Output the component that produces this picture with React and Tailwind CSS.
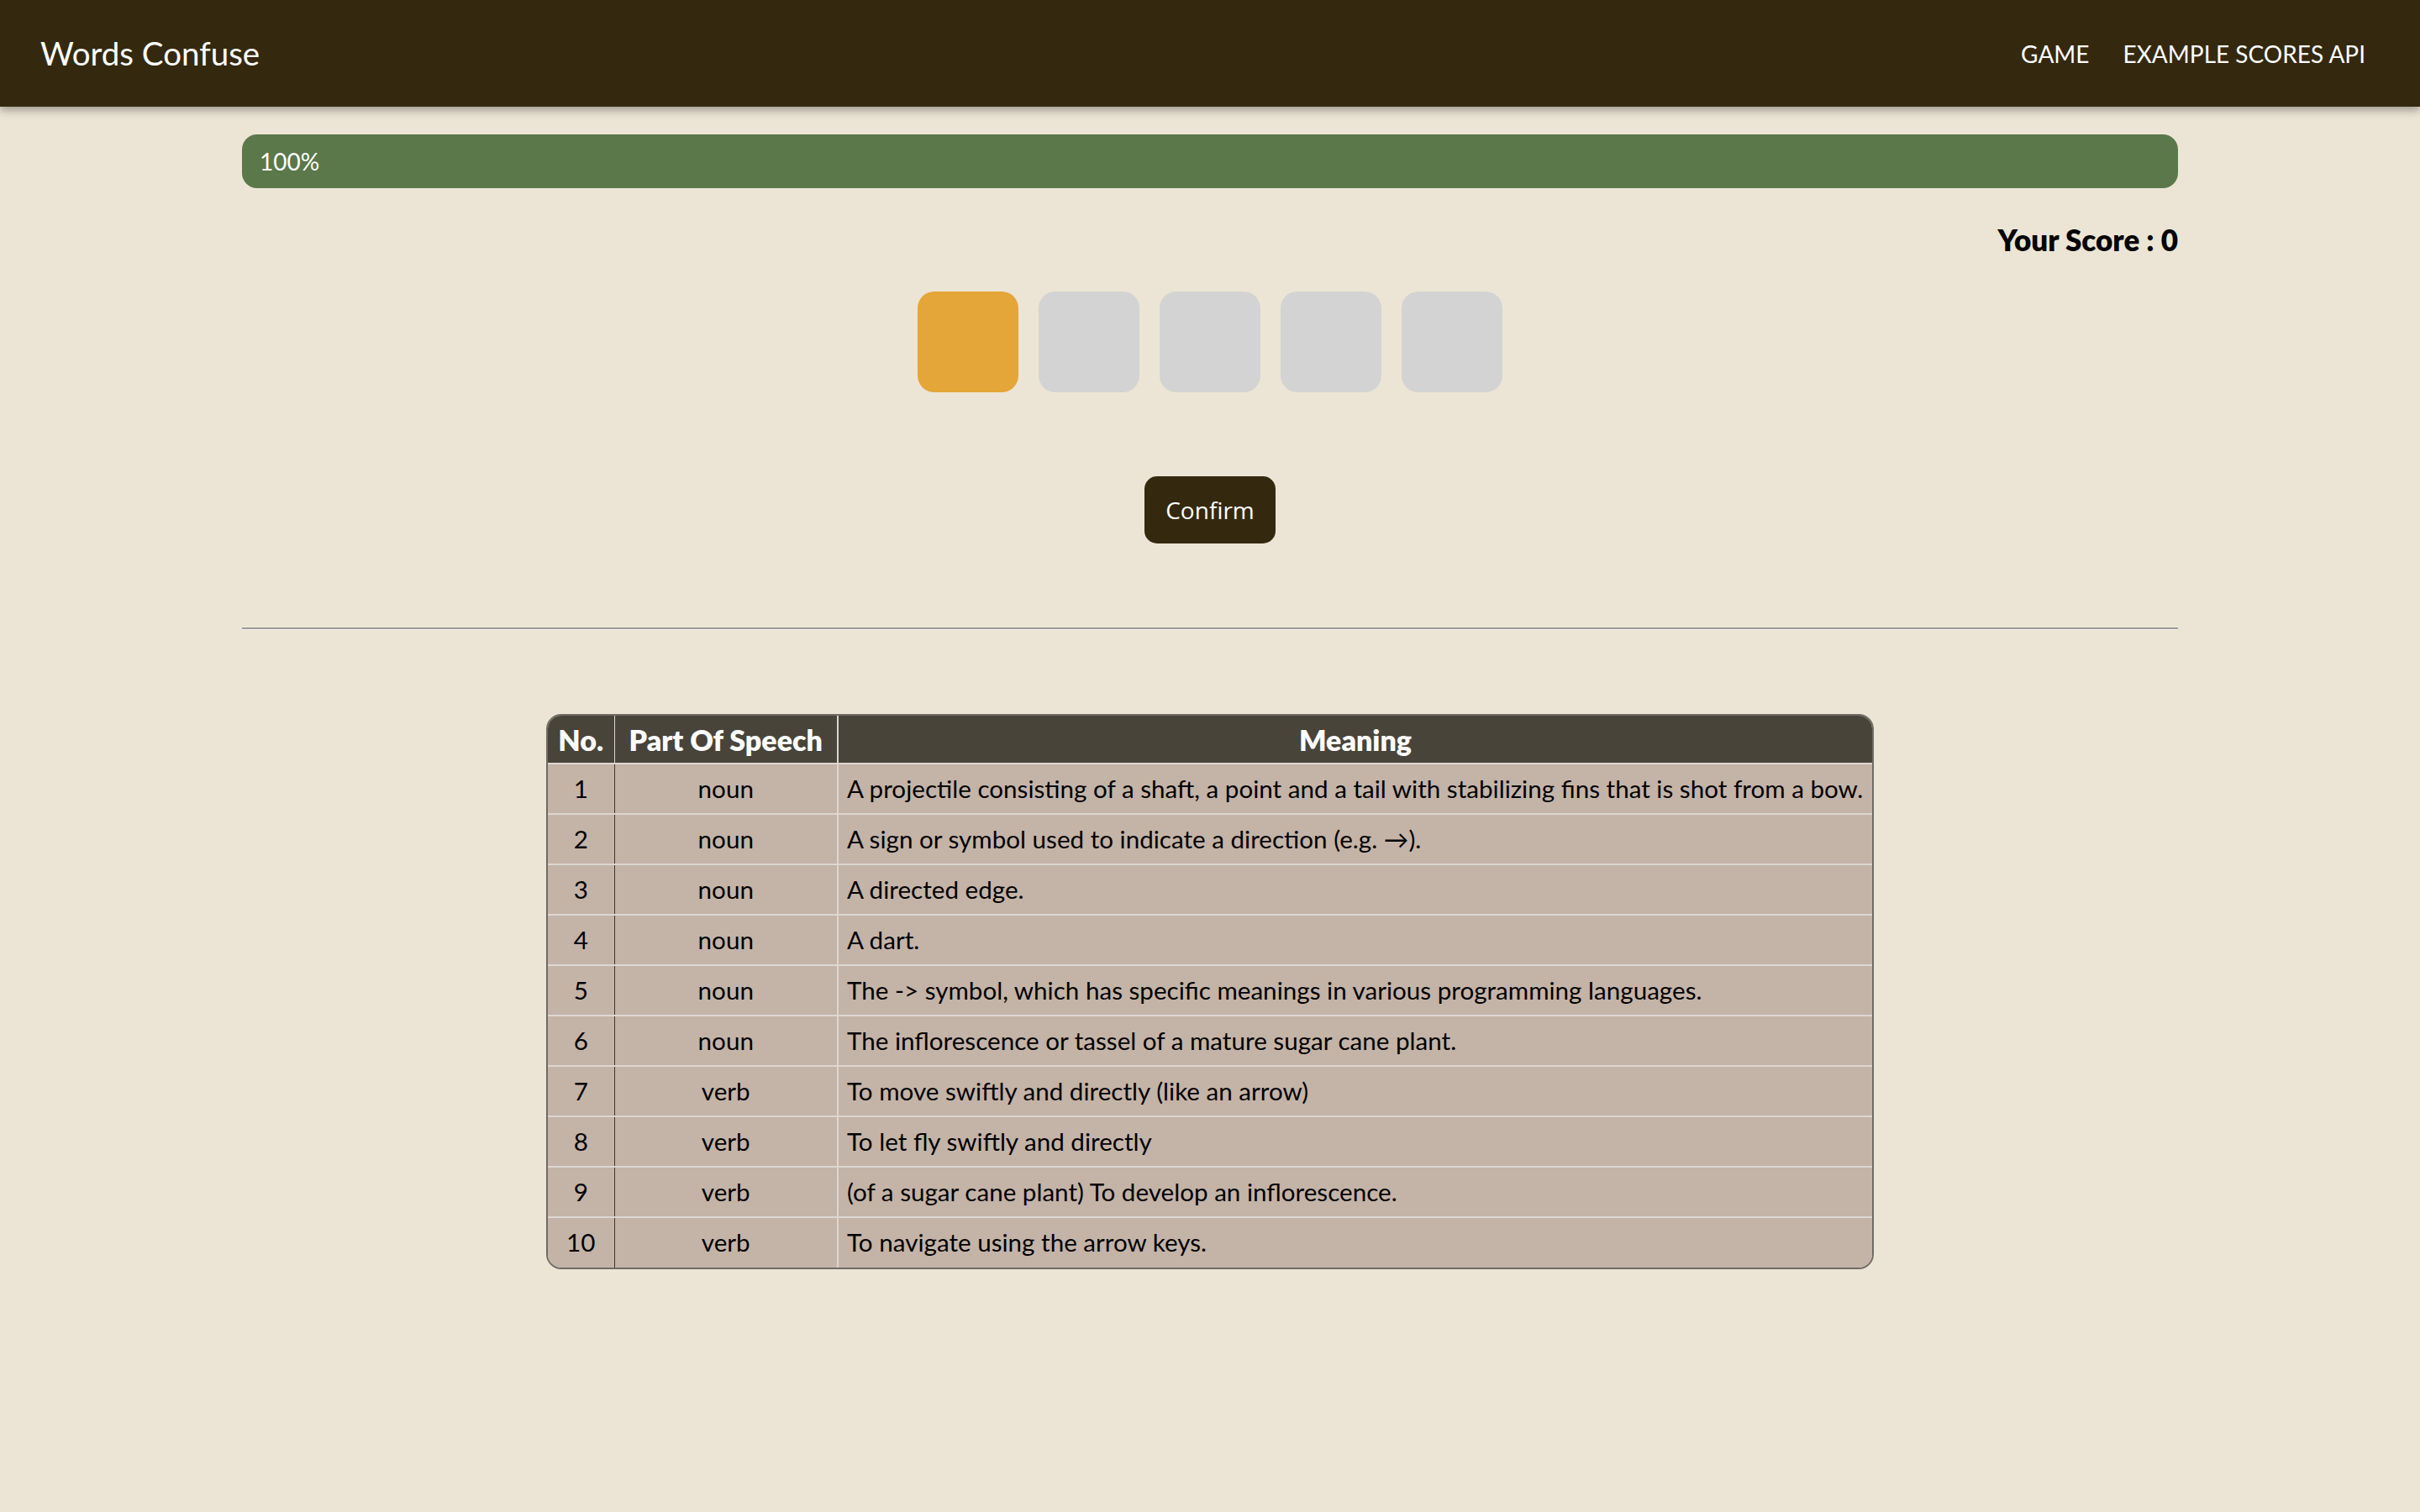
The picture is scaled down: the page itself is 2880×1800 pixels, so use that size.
const ROWS = [
    { no: 1, pos: "noun", meaning: "A projectile consisting of a shaft, a point and a tail with stabilizing fins that is shot from a bow." },
    { no: 2, pos: "noun", meaning: "A sign or symbol used to indicate a direction (e.g. →)." },
    { no: 3, pos: "noun", meaning: "A directed edge." },
    { no: 4, pos: "noun", meaning: "A dart." },
    { no: 5, pos: "noun", meaning: "The -> symbol, which has specific meanings in various programming languages." },
    { no: 6, pos: "noun", meaning: "The inflorescence or tassel of a mature sugar cane plant." },
    { no: 7, pos: "verb", meaning: "To move swiftly and directly (like an arrow)" },
    { no: 8, pos: "verb", meaning: "To let fly swiftly and directly" },
    { no: 9, pos: "verb", meaning: "(of a sugar cane plant) To develop an inflorescence." },
    { no: 10, pos: "verb", meaning: "To navigate using the arrow keys." },
];

const BOXES = [true, false, false, false, false];

export default function App() {
    return (
        <div className="min-h-screen bg-[#ece5d5] font-['Lato',sans-serif] text-black">
            <header className="h-[127px] bg-[#34290f] flex items-center justify-between pl-[48px] pr-[65px] shadow-[0_4px_10px_rgba(0,0,0,0.35)] relative z-10">
                <h1 className="text-[38.5px] text-white">Words Confuse</h1>
                <nav className="flex gap-[40px] text-[28px] text-white uppercase">
                    <a href="#">Game</a>
                    <a href="#">Example Scores API</a>
                </nav>
            </header>

            <main className="w-[80%] mx-auto pt-[33px] pb-[100px]">
                {/* progress */}
                <div className="h-[64px] rounded-[18px] bg-[#5a784a] flex items-center pl-[21px] text-white text-[28px]">
                    100%
                </div>

                <p className="mt-[41px] text-right text-[35px] font-extrabold leading-[40px]">Your Score : 0</p>

                <div className="mt-[42px] flex justify-center gap-[24px]">
                    {BOXES.map((active, i) => (
                        <div
                            key={i}
                            className={active ? "w-[120px] h-[120px] rounded-[20px] bg-[#e4a539]" : "w-[120px] h-[120px] rounded-[20px] bg-[#d3d3d3]"}
                        />
                    ))}
                </div>

                <div className="mt-[100px] flex justify-center">
                    <button className="h-[80px] px-[25px] rounded-[15px] bg-[#34290f] text-white text-[28px] font-['Open_Sans',sans-serif]">
                        Confirm
                    </button>
                </div>

                <div className="mt-[100px] border-t-2 border-[#9a9a9a] border-b border-b-[#f7f4ee]" />

                <div className="mt-[100px] mx-auto w-[1580px] rounded-[18px] border-2 border-[#6f6b65] overflow-hidden">
                    <table className="w-full border-collapse text-[29.6px]">
                        <thead>
                            <tr className="bg-[#48443a] text-white text-[34px]">
                                <th className="h-[57px] w-[79px] border-r border-[#d8d4d0] font-extrabold">No.</th>
                                <th className="w-[266px] border-r-2 border-[#d8d4d0] font-extrabold">Part Of Speech</th>
                                <th className="font-extrabold">Meaning</th>
                            </tr>
                        </thead>
                        <tbody className="bg-[#c4b3a7]">
                            {ROWS.map(r => (
                                <tr key={r.no} className="border-t-2 border-[#dcd7d2]">
                                    <td className="h-[60px] text-center border-r border-[#3d3930]">{r.no}</td>
                                    <td className="text-center border-r-2 border-[#dcd7d2]">{r.pos}</td>
                                    <td className="pl-[10px] whitespace-nowrap">{r.meaning}</td>
                                </tr>
                            ))}
                        </tbody>
                    </table>
                </div>
            </main>
        </div>
    );
}
